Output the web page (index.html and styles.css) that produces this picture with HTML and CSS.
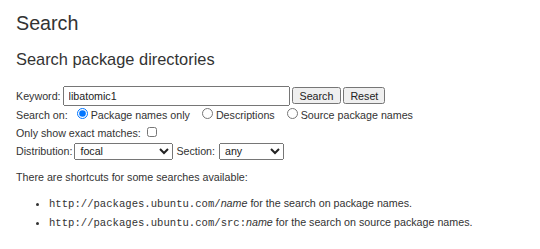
FILE: index.html
```html
<!DOCTYPE html>
<html lang="en">
<head>
  <meta charset="UTF-8" />
  <title>Search</title>
  <link rel="stylesheet" href="styles.css">
</head>
<body>
  <h1>Search</h1>
  <h2>Search package directories</h2>

  <form class="search-form">
    <div class="row row-keyword">
      Keyword: <input type="text" class="keyword" value="libatomic1"> <input type="submit" value="Search"> <input type="reset" value="Reset">
    </div>
    <div class="row">
      Search on: <input type="radio" name="searchon" id="names" checked><label for="names">Package names only</label>
      <input type="radio" name="searchon" id="desc"><label for="desc">Descriptions</label>
      <input type="radio" name="searchon" id="src"><label for="src">Source package names</label>
    </div>
    <div class="row">
      Only show exact matches: <input type="checkbox" name="exact">
    </div>
    <div class="row">
      Distribution: <select class="dist">
        <option>focal</option>
        <option>jammy</option>
        <option>noble</option>
      </select> Section: <select class="section">
        <option>any</option>
        <option>main</option>
        <option>universe</option>
      </select>
    </div>
  </form>

  <p class="note">There are shortcuts for some searches available:</p>
  <ul class="shortcuts">
    <li><code>http://packages.ubuntu.com/<var>name</var></code> for the search on package names.</li>
    <li><code>http://packages.ubuntu.com/src:<var>name</var></code> for the search on source package names.</li>
  </ul>
</body>
</html>
```

FILE: styles.css
```css
body {
  margin: 0;
  padding: 0 16px;
  font-family: 'Liberation Sans', Arial, sans-serif;
  font-size: 10.7px;
  color: #333;
  background: #fff;
}

h1 {
  font-size: 19.7px;
  font-weight: normal;
  line-height: 24px;
  margin: 11px 0 0;
}

h2 {
  font-size: 16.4px;
  font-weight: normal;
  line-height: 20px;
  margin: 14px 0 0;
}

.search-form {
  margin-top: 17px;
}

.row {
  line-height: 18px;
}

.row-keyword {
  line-height: 20px;
}

input, select {
  font-family: 'Liberation Sans', Arial, sans-serif;
  font-size: 10.7px;
}

input.keyword {
  width: 227px;
  height: 20px;
  box-sizing: border-box;
  padding: 0 4px;
  margin-left: -1px;
  color: #222;
  vertical-align: top;
}

input[type="submit"], input[type="reset"] {
  height: 17px;
  padding: 0 6px;
  margin: 1px 0 0 -1px;
  vertical-align: top;
  color: #222;
}

input[type="reset"] {
  padding: 0 5px;
}

input[type="radio"] {
  width: 11px;
  height: 11px;
  margin: 0 3px 0 6px;
}

input[type="radio"] + label {
  margin-right: 3px;
}

input[type="checkbox"] {
  width: 10px;
  height: 10px;
  margin: 0 0 0 3px;
}

select {
  height: 17px;
  padding: 0 1px;
  color: #222;
}

select.dist {
  width: 99px;
  margin-left: -1px;
}

select.section {
  width: 65px;
  margin-left: 1px;
}

.note {
  line-height: 14px;
  margin: 10px 0 0;
}

.shortcuts {
  margin: 10px 0 0;
  padding-left: 33px;
}

.shortcuts li {
  line-height: 18px;
}

code {
  font-family: 'Liberation Mono', 'Courier New', monospace;
  font-size: 10.6px;
}

var {
  font-family: 'Liberation Sans', Arial, sans-serif;
  font-size: 10.7px;
  font-style: italic;
}
```
